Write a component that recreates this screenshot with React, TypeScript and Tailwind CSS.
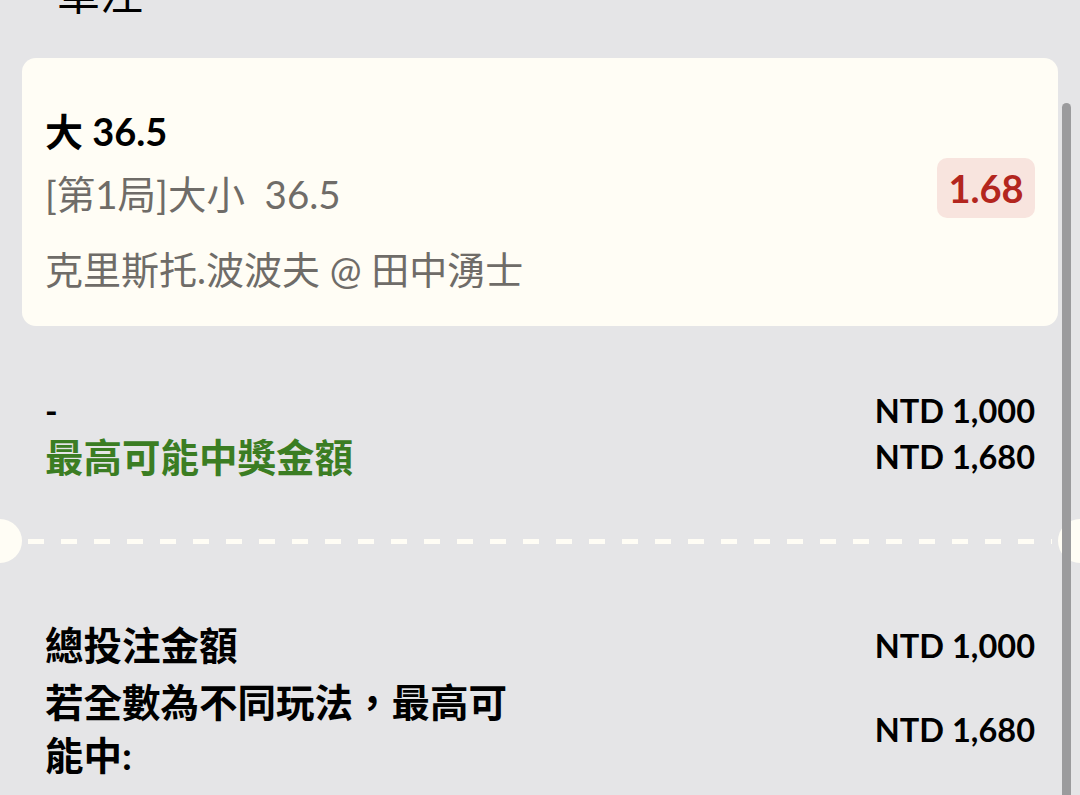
const font = "font-['Lato','Noto_Sans_CJK_TC',sans-serif]";

function Row({ left, right }: { left: React.ReactNode; right: React.ReactNode }) {
  return (
    <div className="flex items-center justify-between">
      {left}
      {right}
    </div>
  );
}

export default function App() {
  return (
    <div className={`relative w-[1080px] h-[795px] overflow-hidden bg-[#e5e5e7] ${font}`}>
      <div className="pl-[57px] -mt-[26px] text-[43px] leading-[40px] text-black">單注</div>

      <div className="mx-[22px] mt-[44px] rounded-[14px] bg-[#fffdf5] px-[23px] pt-[48px] pb-[32px] flex items-start justify-between">
        <div>
          <div className="text-[38px] leading-[50px] font-bold text-black">大 36.5</div>
          <div className="mt-[13px] text-[38.5px] leading-[50px] text-[#6f6c68]">[第1局]大小&nbsp; 36.5</div>
          <div className="mt-[25px] text-[38px] leading-[50px] text-[#6f6c68]">克里斯托.波波夫 @ 田中湧士</div>
        </div>
        <div className="mt-[52px] w-[98px] h-[60px] rounded-[10px] bg-[#f8e4de] flex items-center justify-center text-[38px] font-bold text-[#b3261e]">
          1.68
        </div>
      </div>

      <div className="px-[45px] mt-[62px]">
        <Row
          left={<span className="text-[34px] leading-[46px] font-bold text-black">-</span>}
          right={<span className="text-[32.5px] leading-[46px] font-bold text-black">NTD 1,000</span>}
        />
        <Row
          left={<span className="text-[38.5px] leading-[46px] font-bold text-[#3b7d23]">最高可能中獎金額</span>}
          right={<span className="text-[32.5px] leading-[46px] font-bold text-black">NTD 1,680</span>}
        />
      </div>

      <div className="mt-[39px] flex items-center">
        <div className="-ml-[22px] w-[44px] h-[44px] rounded-full bg-[#fffdf5] shrink-0" />
        <div className="mx-[6px] flex-1 h-[5px] bg-[repeating-linear-gradient(90deg,#fffdf5_0_16px,transparent_16px_33px)]" />
        <div className="-mr-[22px] w-[44px] h-[44px] rounded-full bg-[#fffdf5] shrink-0" />
      </div>

      <div className="px-[45px] mt-[56px]">
        <Row
          left={<span className="text-[38.5px] leading-[53px] font-bold text-black">總投注金額</span>}
          right={<span className="text-[32.5px] leading-[53px] font-bold text-black">NTD 1,000</span>}
        />
        <div className="mt-[4px]">
          <Row
            left={<span className="w-[480px] text-[38.5px] leading-[53px] font-bold text-black">若全數為不同玩法，最高可能中:</span>}
            right={<span className="text-[32.5px] leading-[53px] font-bold text-black">NTD 1,680</span>}
          />
        </div>
      </div>

      <div className="absolute right-[9px] top-[103px] w-[9px] h-[720px] rounded-full bg-[#9b9b9d]" />
    </div>
  );
}
